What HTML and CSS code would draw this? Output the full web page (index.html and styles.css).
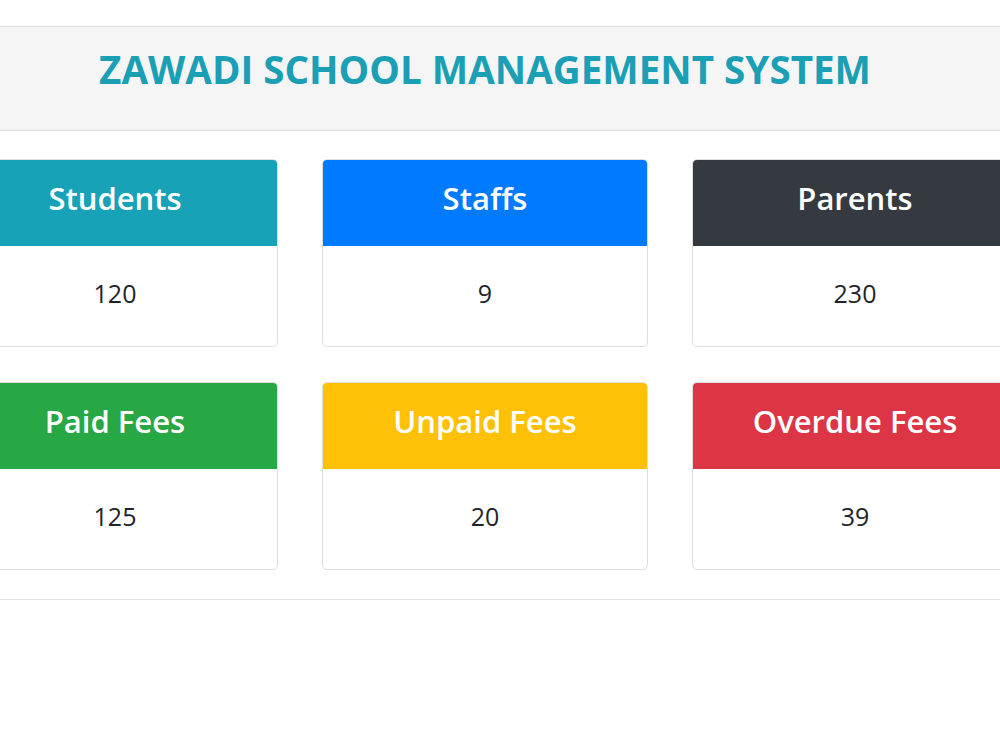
FILE: index.html
```html
<!DOCTYPE html>
<html lang="en">
<head>
    <meta charset="UTF-8">
    <meta name="viewport" content="width=device-width, initial-scale=1.0">
    <title>Zawadi School Management System</title>
    <link rel="stylesheet" href="styles.css">
</head>
<body>
    <div class="page">
        <header class="banner">
            <h1>ZAWADI SCHOOL MANAGEMENT SYSTEM</h1>
        </header>

        <section class="stats">
            <div class="card">
                <div class="card-header bg-info">Students</div>
                <div class="card-body">120</div>
            </div>
            <div class="card">
                <div class="card-header bg-primary">Staffs</div>
                <div class="card-body">9</div>
            </div>
            <div class="card">
                <div class="card-header bg-dark">Parents</div>
                <div class="card-body">230</div>
            </div>
            <div class="card">
                <div class="card-header bg-success">Paid Fees</div>
                <div class="card-body">125</div>
            </div>
            <div class="card">
                <div class="card-header bg-warning">Unpaid Fees</div>
                <div class="card-body">20</div>
            </div>
            <div class="card">
                <div class="card-header bg-danger">Overdue Fees</div>
                <div class="card-body">39</div>
            </div>
        </section>
    </div>
</body>
</html>
```

FILE: styles.css
```css
body {
    margin: 0;
    font-family: "Open Sans", "Noto Sans", Arial, sans-serif;
    color: #212529;
    background-color: #fff;
    overflow: hidden;
}
.page {
    width: 1066px;
    margin-left: -48px;
}
.banner {
    margin-top: 26px;
    background-color: #f5f5f5;
    border-top: 1px solid #dcdcdc;
    border-bottom: 1px solid #dcdcdc;
    height: 103px;
    display: flex;
    align-items: center;
    justify-content: center;
}
.banner h1 {
    margin: 0 0 18px;
    font-size: 38.6px;
    font-weight: 700;
    color: #1a9fb5;
    line-height: 1.2;
}
.stats {
    display: grid;
    grid-template-columns: repeat(3, 326px);
    column-gap: 44px;
    row-gap: 35px;
    padding: 28px 0 29px;
    border-bottom: 1px solid #e2e2e2;
}
.card {
    border: 1px solid #dedede;
    border-radius: 5px;
    overflow: hidden;
    background-color: #fff;
}
.card-header {
    height: 86px;
    display: flex;
    align-items: center;
    justify-content: center;
    padding-bottom: 10px;
    box-sizing: border-box;
    color: #fff;
    font-size: 31px;
    font-weight: 600;
}
.card-body {
    height: 100px;
    display: flex;
    align-items: center;
    justify-content: center;
    padding-bottom: 6px;
    box-sizing: border-box;
    font-size: 25px;
    font-weight: 500;
}
.bg-info { background-color: #17a2b8; }
.bg-primary { background-color: #007bff; }
.bg-dark { background-color: #343a40; }
.bg-success { background-color: #28a745; }
.bg-warning { background-color: #ffc107; }
.bg-danger { background-color: #dc3545; }
```
